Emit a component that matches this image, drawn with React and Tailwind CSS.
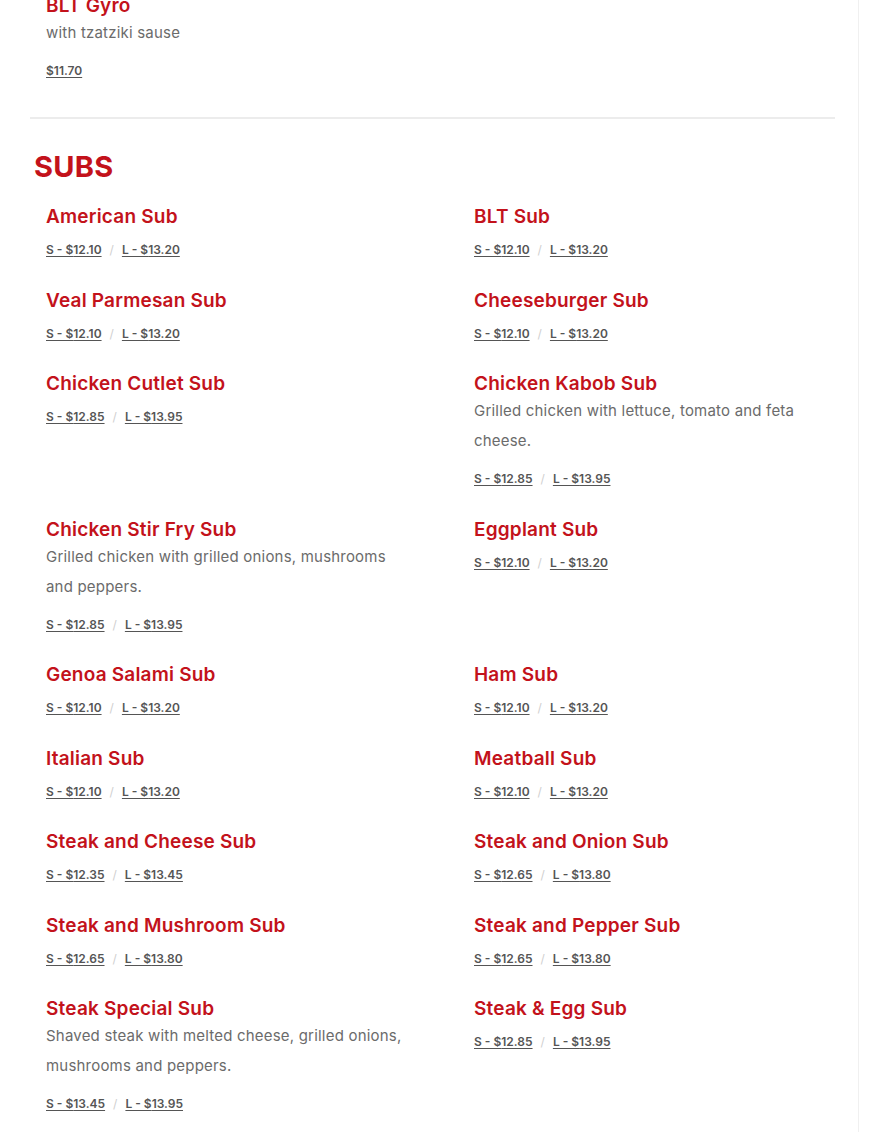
import React from 'react'

const subs = [
  { name: 'American Sub', s: '12.10', l: '13.20' },
  { name: 'BLT Sub', s: '12.10', l: '13.20' },
  { name: 'Veal Parmesan Sub', s: '12.10', l: '13.20' },
  { name: 'Cheeseburger Sub', s: '12.10', l: '13.20' },
  { name: 'Chicken Cutlet Sub', s: '12.85', l: '13.95' },
  {
    name: 'Chicken Kabob Sub',
    desc: 'Grilled chicken with lettuce, tomato and feta cheese.',
    s: '12.85',
    l: '13.95',
  },
  {
    name: 'Chicken Stir Fry Sub',
    desc: 'Grilled chicken with grilled onions, mushrooms and peppers.',
    s: '12.85',
    l: '13.95',
  },
  { name: 'Eggplant Sub', s: '12.10', l: '13.20' },
  { name: 'Genoa Salami Sub', s: '12.10', l: '13.20' },
  { name: 'Ham Sub', s: '12.10', l: '13.20' },
  { name: 'Italian Sub', s: '12.10', l: '13.20' },
  { name: 'Meatball Sub', s: '12.10', l: '13.20' },
  { name: 'Steak and Cheese Sub', s: '12.35', l: '13.45' },
  { name: 'Steak and Onion Sub', s: '12.65', l: '13.80' },
  { name: 'Steak and Mushroom Sub', s: '12.65', l: '13.80' },
  { name: 'Steak and Pepper Sub', s: '12.65', l: '13.80' },
  {
    name: 'Steak Special Sub',
    desc: 'Shaved steak with melted cheese, grilled onions, mushrooms and peppers.',
    s: '13.45',
    l: '13.95',
  },
  { name: 'Steak & Egg Sub', s: '12.85', l: '13.95' },
]

const Price = ({ children }) => (
  <a className="text-[12px] font-semibold text-[#555] underline underline-offset-2">
    {children}
  </a>
)

const Item = ({ name, desc, children }) => (
  <div className="w-[362px]">
    <h3 className="text-[19px] leading-[24px] font-semibold tracking-[0.2px] text-[#c3121b]">
      {name}
    </h3>
    {desc && (
      <p className="mb-[2px] text-[15px] leading-[30px] tracking-[0.2px] text-[#6b6b6b]">
        {desc}
      </p>
    )}
    <div className={`${desc ? 'mt-[13px]' : 'mt-[11px]'} flex h-[20px] items-center gap-[8px]`}>
      {children}
    </div>
  </div>
)

const App = () => {
  return (
    <div
      className="min-h-[1138px] w-[859px] border-r border-[#f0f0f0] bg-white"
      style={{ fontFamily: 'Inter, "Noto Sans", sans-serif' }}
    >
      <div className="-mt-[6px] pl-[46px]">
        <Item name="BLT Gyro" desc="with tzatziki sause">
          <Price>$11.70</Price>
        </Item>
      </div>
      <div className="mx-[30px] mt-[36px] mr-[23px] border-t-2 border-[#ececec]" />
      <h2 className="mt-[30px] pl-[34px] text-[29px] leading-[36px] font-bold tracking-[0.3px] text-[#c3121b]">
        SUBS
      </h2>
      <div className="mt-[20px] grid grid-cols-[428px_1fr] gap-y-[28.5px] pl-[46px]">
        {subs.map((item) => (
          <Item key={item.name} name={item.name} desc={item.desc}>
            <Price>S - ${item.s}</Price>
            <span className="text-[12px] text-[#cfcfcf]">/</span>
            <Price>L - ${item.l}</Price>
          </Item>
        ))}
      </div>
    </div>
  )
}

export default App
